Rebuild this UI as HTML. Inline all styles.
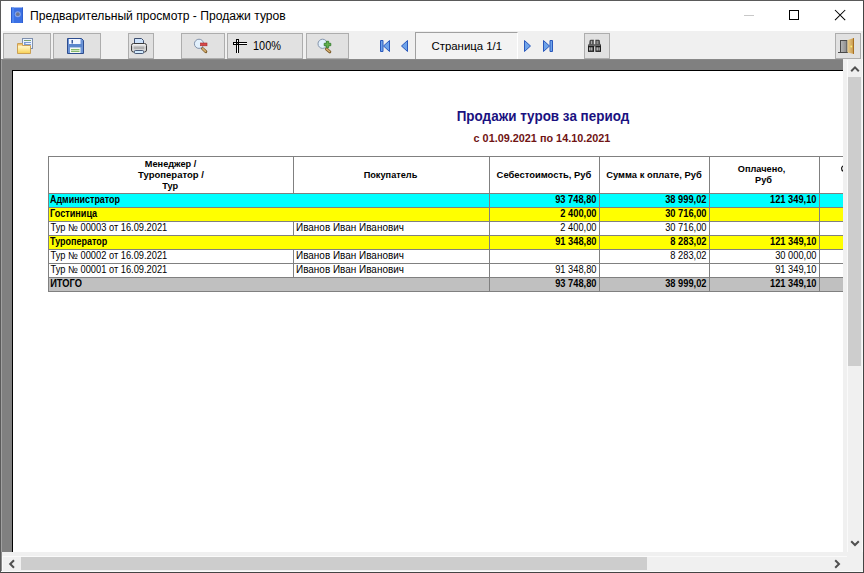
<!DOCTYPE html>
<html><head><meta charset="utf-8">
<style>
*{margin:0;padding:0;box-sizing:border-box}
html,body{width:864px;height:573px;overflow:hidden;background:#fff}
body{position:relative;font-family:"Liberation Sans",sans-serif;color:#000}
.a{position:absolute}
.t{position:absolute;white-space:nowrap;line-height:1}
.btn{position:absolute;top:33px;height:26px;background:#e1e1e1;border:1px solid #adadad}
.ln{position:absolute;background:#808080}
.b{font-weight:bold}
</style></head><body>
<!-- window border -->
<div class="a" style="left:0;top:0;width:864px;height:573px;border:1px solid #5a5a5a;border-right-color:#444;border-bottom-color:#444"></div>

<!-- title bar -->
<div class="a" style="left:1px;top:1px;width:862px;height:31px;background:#fff"></div>
<svg class="a" style="left:11px;top:7px" width="13" height="17" viewBox="0 0 13 17">
  <rect x="0" y="0.5" width="12" height="15.5" fill="#3b70e4"/>
  <rect x="0" y="0.5" width="1" height="15.5" fill="#2c5ccc"/>
  <rect x="1" y="0.5" width="2" height="15.5" fill="#4d85f0"/>
  <rect x="11" y="0.5" width="1" height="15.5" fill="#3060d0"/>
  <circle cx="6.8" cy="7.2" r="3" fill="#86a6ec"/>
  <circle cx="6.8" cy="7.2" r="1.9" fill="#6e7892"/>
</svg>

<div class="a" style="left:744px;top:15px;width:10px;height:1px;background:#c8c8c8"></div>
<div class="a" style="left:789px;top:10px;width:10px;height:10px;border:1px solid #000"></div>
<svg class="a" style="left:834px;top:9px" width="13" height="13" viewBox="0 0 13 13">
  <path d="M1 1 L11.2 11.2 M11.2 1 L1 11.2" stroke="#000" stroke-width="1.05"/>
</svg>

<!-- toolbar -->
<div class="a" style="left:1px;top:31px;width:862px;height:28px;background:#f0f0f0"></div>
<div class="a" style="left:1px;top:31px;width:2px;height:28px;background:#fafafa"></div>
<div class="btn" style="left:3px;width:48px"></div>
<div class="btn" style="left:53px;width:48px"></div>
<div class="btn" style="left:128px;width:26px"></div>
<div class="btn" style="left:181px;width:44px"></div>
<div class="btn" style="left:227px;width:76px"></div>
<div class="btn" style="left:306px;width:43px"></div>
<div class="a" style="left:415px;top:32px;width:103px;height:27px;background:#f3f3f3;border-top:1px solid #a0a0a0;border-left:1px solid #a0a0a0;border-right:1px solid #fff"></div>

<div class="btn" style="left:584px;width:26px"></div>
<div class="btn" style="left:835px;width:26px"></div>


<!-- toolbar icons -->
<svg class="a" style="left:0;top:0;overflow:visible" width="864" height="60" viewBox="0 0 864 60">
 <defs>
  <linearGradient id="gFold" x1="0" y1="0" x2="0" y2="1"><stop offset="0" stop-color="#fffae0"/><stop offset="0.45" stop-color="#fff0b0"/><stop offset="1" stop-color="#f7cf50"/></linearGradient>
  <linearGradient id="gPr" x1="0" y1="0" x2="0" y2="1"><stop offset="0" stop-color="#fafafa"/><stop offset="0.5" stop-color="#c8c8c8"/><stop offset="1" stop-color="#e8e8e8"/></linearGradient>
  <linearGradient id="gNav" x1="0" y1="0" x2="1" y2="0"><stop offset="0" stop-color="#8cc0f8"/><stop offset="1" stop-color="#2a62cc"/></linearGradient>
  <linearGradient id="gNavL" x1="1" y1="0" x2="0" y2="0"><stop offset="0" stop-color="#8cc0f8"/><stop offset="1" stop-color="#2a62cc"/></linearGradient>
  <linearGradient id="gDoor" x1="0" y1="0" x2="1" y2="0"><stop offset="0" stop-color="#ecd08e"/><stop offset="1" stop-color="#c49448"/></linearGradient>
  <linearGradient id="gFrame" x1="0" y1="0" x2="1" y2="0"><stop offset="0" stop-color="#b8b8b8"/><stop offset="1" stop-color="#8a8a8a"/></linearGradient>
 </defs>
 <!-- open -->
 <rect x="22.5" y="38.5" width="10" height="10" fill="#eaf4ff" stroke="#7e8fae"/>
 <rect x="24" y="40" width="7" height="1" fill="#7da06e"/>
 <rect x="24" y="42" width="7" height="1" fill="#7d9cd2"/>
 <rect x="24" y="44" width="7" height="1" fill="#7d9cd2"/>
 <rect x="24" y="42" width="1.5" height="4" fill="#7d9cd2"/>
 <path d="M17.5 43.5 H22.5 V45.5 H30.5 V53.5 H17.5 Z" fill="url(#gFold)" stroke="#caa055"/>
 <rect x="18" y="44" width="4" height="1.5" fill="#f4c068"/>
 <!-- save -->
 <path d="M67.5 38.5 H81.5 L83.5 40.5 V53.5 H67.5 Z" fill="#6b94d6" stroke="#2d4c8e"/>
 <rect x="69" y="39" width="11.5" height="5" fill="#f2f6ff"/>
 <rect x="71.5" y="40" width="1.5" height="3.5" fill="#3a5a9c"/>
 <rect x="69" y="44" width="13" height="3" fill="#5a86cc"/>
 <rect x="70" y="47.5" width="10.5" height="5.5" fill="#f6fbf2"/>
 <rect x="71" y="49" width="8.5" height="1.2" fill="#86b86a"/>
 <rect x="71" y="50.8" width="8.5" height="1.2" fill="#86b86a"/>
 <!-- print -->
 <path d="M134.5 38.5 H141.5 L143.5 40.5 V45.5 H134.5 Z" fill="#cde2fa" stroke="#3e4e6e"/>
 <rect x="131.5" y="43.5" width="15" height="8.5" rx="2" fill="url(#gPr)" stroke="#3c3c3c"/>
 <rect x="134" y="46.5" width="10" height="2.5" fill="#b0b0b0"/>
 <rect x="134.5" y="50.5" width="9" height="3" rx="0.8" fill="#d2eafc" stroke="#4a5a78"/>
 <!-- zoom out -->
 <line x1="202.5" y1="48.5" x2="205.8" y2="51.6" stroke="#7a5a28" stroke-width="3" stroke-linecap="round"/>
 <line x1="202.7" y1="48.7" x2="205.5" y2="51.3" stroke="#d8b070" stroke-width="1.6" stroke-linecap="round"/>
 <circle cx="199" cy="43.8" r="4.6" fill="#e2f0fc" stroke="#8494ac" stroke-width="1"/>
 <rect x="200.5" y="43" width="6.5" height="2.8" fill="#d84848" stroke="#a42828" stroke-width="0.6"/>
 <!-- fit -->
 <g shape-rendering="crispEdges" fill="#000">
 <rect x="236" y="39" width="1" height="14"/><rect x="238" y="39" width="1" height="14"/><rect x="236" y="39" width="3" height="1"/>
 <rect x="233" y="42" width="14" height="1"/><rect x="233" y="44" width="14" height="1"/><rect x="233" y="42" width="1" height="3"/>
 <rect x="237" y="40" width="1" height="2" fill="#fff"/><rect x="237" y="45" width="1" height="8" fill="#fff"/>
 <rect x="234" y="43" width="2" height="1" fill="#fff"/><rect x="239" y="43" width="8" height="1" fill="#fff"/>
 <rect x="237" y="43" width="1" height="1" fill="#888"/>
 </g>
 <!-- zoom in -->
 <line x1="326.5" y1="49" x2="329.8" y2="51.8" stroke="#7a5a28" stroke-width="3" stroke-linecap="round"/>
 <line x1="326.7" y1="49.2" x2="329.5" y2="51.5" stroke="#d8b070" stroke-width="1.6" stroke-linecap="round"/>
 <circle cx="322.6" cy="43.8" r="4.6" fill="#e2f0fc" stroke="#8494ac" stroke-width="1"/>
 <path d="M326.3 41.3 H328.7 V43.3 H330.8 V45.7 H328.7 V47.7 H326.3 V45.7 H324.2 V43.3 H326.3 Z" fill="#62b04e" stroke="#2e7a2a" stroke-width="0.8"/>
 <!-- nav -->
 <g stroke="#2a58bc" stroke-width="1" stroke-linejoin="round">
 <rect x="380.5" y="40.5" width="2.5" height="11" fill="#6ea3ea"/>
 <path d="M389.5 40.5 L383.5 46 L389.5 51.5 Z" fill="#6ea3ea"/>
 <path d="M407.5 40.5 L401.5 46 L407.5 51.5 Z" fill="#6ea3ea"/>
 <path d="M524.5 40.5 L530.5 46 L524.5 51.5 Z" fill="#6ea3ea"/>
 <path d="M543.5 40.5 L549.5 46 L543.5 51.5 Z" fill="#6ea3ea"/>
 <rect x="550" y="40.5" width="2.5" height="11" fill="#6ea3ea"/>
 </g>
 <!-- binoculars -->
 <path d="M589.6 40.6 L590.6 39.8 H593.8 V44.6 H589.2 Z" fill="#3c3c3c"/>
 <path d="M595.4 39.8 H598.8 L599.8 40.6 L600.2 44.6 H595.4 Z" fill="#3c3c3c"/>
 <rect x="590.8" y="40.8" width="1.1" height="3.4" fill="#b4b4b4"/><rect x="592.6" y="40.8" width="0.8" height="3.4" fill="#8a8a8a"/>
 <rect x="596.6" y="40.8" width="1.1" height="3.4" fill="#b4b4b4"/><rect x="598.4" y="40.8" width="0.8" height="3.4" fill="#8a8a8a"/>
 <rect x="588.2" y="44.4" width="12.8" height="1.9" fill="#2e2e2e"/>
 <rect x="589" y="44.9" width="11.2" height="0.7" fill="#8c8c8c"/>
 <rect x="588" y="46" width="6.1" height="5.9" fill="#1e1e1e"/>
 <rect x="595.4" y="46" width="5.6" height="5.9" fill="#1e1e1e"/>
 <rect x="589.2" y="47.3" width="1.3" height="3.3" fill="#d4d4d4"/><rect x="591.1" y="47.3" width="1.4" height="3.3" fill="#b8b8b8"/>
 <rect x="596.5" y="47.3" width="1.3" height="3.3" fill="#d4d4d4"/><rect x="598.4" y="47.3" width="1.4" height="3.3" fill="#b8b8b8"/>
 <!-- door -->
 <rect x="840.5" y="40.5" width="6.5" height="12" fill="url(#gFrame)" stroke="#4a4a4a"/>
 <rect x="838" y="52" width="10" height="1" fill="#4a4a4a"/>
 <path d="M847.5 40 L854 38 V54 L847.5 52.5 Z" fill="url(#gDoor)"/>
 <path d="M853 38.3 L854 38 V54 L853 53.8 Z" fill="#a87020"/>
 <circle cx="851.3" cy="46.5" r="0.9" fill="#fff070"/>
</svg>

<!-- preview gray area -->
<div class="a" style="left:1px;top:59px;width:842px;height:493px;background:#808080"></div>
<div class="a" style="left:1px;top:59px;width:1px;height:493px;background:#a0a0a0"></div>
<div class="a" style="left:1px;top:59px;width:842px;height:1px;background:#888"></div>
<!-- page -->
<div class="a" id="page" style="left:12px;top:70px;width:831px;height:482px;background:#fff;border-top:1px solid #000;border-left:1px solid #000;overflow:hidden">
<div class="a" style="left:-13px;top:-71px;width:864px;height:573px">
<div class="a" style="left:48px;top:194px;width:900px;height:13px;background:#00ffff"></div>
<div class="a" style="left:48px;top:208px;width:900px;height:13px;background:#ffff00"></div>
<div class="a" style="left:48px;top:236px;width:900px;height:13px;background:#ffff00"></div>
<div class="a" style="left:48px;top:278px;width:900px;height:13px;background:#c0c0c0"></div>
<div class="a" style="left:48px;top:156px;width:900px;height:1px;background:#808080"></div>
<div class="a" style="left:48px;top:193px;width:900px;height:1px;background:#808080"></div>
<div class="a" style="left:48px;top:207px;width:900px;height:1px;background:#808080"></div>
<div class="a" style="left:48px;top:221px;width:900px;height:1px;background:#808080"></div>
<div class="a" style="left:48px;top:235px;width:900px;height:1px;background:#808080"></div>
<div class="a" style="left:48px;top:249px;width:900px;height:1px;background:#808080"></div>
<div class="a" style="left:48px;top:263px;width:900px;height:1px;background:#808080"></div>
<div class="a" style="left:48px;top:277px;width:900px;height:1px;background:#808080"></div>
<div class="a" style="left:48px;top:291px;width:900px;height:1px;background:#808080"></div>
<div class="a" style="left:48px;top:156px;width:1px;height:136px;background:#808080"></div>
<div class="a" style="left:489px;top:156px;width:1px;height:136px;background:#808080"></div>
<div class="a" style="left:599px;top:156px;width:1px;height:136px;background:#808080"></div>
<div class="a" style="left:709px;top:156px;width:1px;height:136px;background:#808080"></div>
<div class="a" style="left:819px;top:156px;width:1px;height:136px;background:#808080"></div>
<div class="a" style="left:293px;top:156px;width:1px;height:37px;background:#808080"></div>
<div class="a" style="left:293px;top:221px;width:1px;height:15px;background:#808080"></div>
<div class="a" style="left:293px;top:249px;width:1px;height:15px;background:#808080"></div>
<div class="a" style="left:293px;top:263px;width:1px;height:15px;background:#808080"></div>
<svg class="a" style="left:836px;top:160px" width="20" height="16"><ellipse cx="8.2" cy="8.5" rx="2.6" ry="2.7" fill="none" stroke="#111" stroke-width="1.2"/></svg>
<div class="t" style="left:243px;width:600px;text-align:center;transform-origin:50% 11px;top:110px;font-size:13.3px;font-weight:bold;color:#1a1180;transform:scale(1.012,1.1);">Продажи туров за период</div>
<div class="t" style="left:242.39999999999998px;width:600px;text-align:center;transform-origin:50% 9px;top:133px;font-size:10.7px;font-weight:bold;color:#701414;transform:scale(1.015,1.0);">с 01.09.2021 по 14.10.2021</div>
<div class="t" style="left:-129.4px;width:600px;text-align:center;transform-origin:50% 7px;top:160px;font-size:9.2px;font-weight:bold;color:#000;transform:scale(1.0,1.08);">Менеджер /</div>
<div class="t" style="left:-129px;width:600px;text-align:center;transform-origin:50% 7px;top:171px;font-size:9.2px;font-weight:bold;color:#000;transform:scale(1.035,1.08);">Туроператор /</div>
<div class="t" style="left:-129.8px;width:600px;text-align:center;transform-origin:50% 7px;top:182px;font-size:9.2px;font-weight:bold;color:#000;transform:scale(1.0,1.08);">Тур</div>
<div class="t" style="left:90.5px;width:600px;text-align:center;transform-origin:50% 7px;top:171px;font-size:9.2px;font-weight:bold;color:#000;transform:scale(1.0,1.08);">Покупатель</div>
<div class="t" style="left:244px;width:600px;text-align:center;transform-origin:50% 7px;top:171px;font-size:9.2px;font-weight:bold;color:#000;transform:scale(1.025,1.08);">Себестоимость, Руб</div>
<div class="t" style="left:353.70000000000005px;width:600px;text-align:center;transform-origin:50% 7px;top:171px;font-size:9.2px;font-weight:bold;color:#000;transform:scale(1.02,1.08);">Сумма к оплате, Руб</div>
<div class="t" style="left:461.6px;width:600px;text-align:center;transform-origin:50% 7px;top:165px;font-size:9.2px;font-weight:bold;color:#000;transform:scale(1.0,1.08);">Оплачено,</div>
<div class="t" style="left:463.5px;width:600px;text-align:center;transform-origin:50% 7px;top:176px;font-size:9.2px;font-weight:bold;color:#000;transform:scale(1.0,1.08);">Руб</div>
<div class="t" style="left:50.2px;transform-origin:0 7px;top:196px;font-size:9.3px;font-weight:bold;color:#000;transform:scale(0.96,1.08);">Администратор</div>
<div class="t" style="left:196.5px;width:400px;text-align:right;transform-origin:100% 7px;top:196px;font-size:9.3px;font-weight:bold;color:#000;transform:scale(1.0,1.08);">93 748,80</div>
<div class="t" style="left:306.5px;width:400px;text-align:right;transform-origin:100% 7px;top:196px;font-size:9.3px;font-weight:bold;color:#000;transform:scale(1.0,1.08);">38 999,02</div>
<div class="t" style="left:416.5px;width:400px;text-align:right;transform-origin:100% 7px;top:196px;font-size:9.3px;font-weight:bold;color:#000;transform:scale(1.0,1.08);">121 349,10</div>
<div class="t" style="left:50.2px;transform-origin:0 7px;top:210px;font-size:9.3px;font-weight:bold;color:#000;transform:scale(0.98,1.08);">Гостиница</div>
<div class="t" style="left:196.5px;width:400px;text-align:right;transform-origin:100% 7px;top:210px;font-size:9.3px;font-weight:bold;color:#000;transform:scale(1.0,1.08);">2 400,00</div>
<div class="t" style="left:306.5px;width:400px;text-align:right;transform-origin:100% 7px;top:210px;font-size:9.3px;font-weight:bold;color:#000;transform:scale(1.0,1.08);">30 716,00</div>
<div class="t" style="left:50.5px;transform-origin:0 7px;top:224px;font-size:9.3px;color:#000;transform:scale(1.0,1.08);">Тур № 00003 от 16.09.2021</div>
<div class="t" style="left:295.6px;transform-origin:0 7px;top:224px;font-size:9.3px;color:#000;transform:scale(1.07,1.08);">Иванов Иван Иванович</div>
<div class="t" style="left:196.5px;width:400px;text-align:right;transform-origin:100% 7px;top:224px;font-size:9.3px;color:#000;transform:scale(1.0,1.08);">2 400,00</div>
<div class="t" style="left:306.5px;width:400px;text-align:right;transform-origin:100% 7px;top:224px;font-size:9.3px;color:#000;transform:scale(1.0,1.08);">30 716,00</div>
<div class="t" style="left:50.2px;transform-origin:0 7px;top:238px;font-size:9.3px;font-weight:bold;color:#000;transform:scale(0.967,1.08);">Туроператор</div>
<div class="t" style="left:196.5px;width:400px;text-align:right;transform-origin:100% 7px;top:238px;font-size:9.3px;font-weight:bold;color:#000;transform:scale(1.0,1.08);">91 348,80</div>
<div class="t" style="left:306.5px;width:400px;text-align:right;transform-origin:100% 7px;top:238px;font-size:9.3px;font-weight:bold;color:#000;transform:scale(1.0,1.08);">8 283,02</div>
<div class="t" style="left:416.5px;width:400px;text-align:right;transform-origin:100% 7px;top:238px;font-size:9.3px;font-weight:bold;color:#000;transform:scale(1.0,1.08);">121 349,10</div>
<div class="t" style="left:50.5px;transform-origin:0 7px;top:252px;font-size:9.3px;color:#000;transform:scale(1.0,1.08);">Тур № 00002 от 16.09.2021</div>
<div class="t" style="left:295.6px;transform-origin:0 7px;top:252px;font-size:9.3px;color:#000;transform:scale(1.07,1.08);">Иванов Иван Иванович</div>
<div class="t" style="left:306.5px;width:400px;text-align:right;transform-origin:100% 7px;top:252px;font-size:9.3px;color:#000;transform:scale(1.0,1.08);">8 283,02</div>
<div class="t" style="left:416.5px;width:400px;text-align:right;transform-origin:100% 7px;top:252px;font-size:9.3px;color:#000;transform:scale(1.0,1.08);">30 000,00</div>
<div class="t" style="left:50.5px;transform-origin:0 7px;top:266px;font-size:9.3px;color:#000;transform:scale(1.0,1.08);">Тур № 00001 от 16.09.2021</div>
<div class="t" style="left:295.6px;transform-origin:0 7px;top:266px;font-size:9.3px;color:#000;transform:scale(1.07,1.08);">Иванов Иван Иванович</div>
<div class="t" style="left:196.5px;width:400px;text-align:right;transform-origin:100% 7px;top:266px;font-size:9.3px;color:#000;transform:scale(1.0,1.08);">91 348,80</div>
<div class="t" style="left:416.5px;width:400px;text-align:right;transform-origin:100% 7px;top:266px;font-size:9.3px;color:#000;transform:scale(1.0,1.08);">91 349,10</div>
<div class="t" style="left:50.2px;transform-origin:0 7px;top:280px;font-size:9.3px;font-weight:bold;color:#000;transform:scale(1.0,1.08);">ИТОГО</div>
<div class="t" style="left:196.5px;width:400px;text-align:right;transform-origin:100% 7px;top:280px;font-size:9.3px;font-weight:bold;color:#000;transform:scale(1.0,1.08);">93 748,80</div>
<div class="t" style="left:306.5px;width:400px;text-align:right;transform-origin:100% 7px;top:280px;font-size:9.3px;font-weight:bold;color:#000;transform:scale(1.0,1.08);">38 999,02</div>
<div class="t" style="left:416.5px;width:400px;text-align:right;transform-origin:100% 7px;top:280px;font-size:9.3px;font-weight:bold;color:#000;transform:scale(1.0,1.08);">121 349,10</div>
</div>
</div>

<!-- right strip / scrollbars -->
<div class="a" style="left:843px;top:59px;width:20px;height:513px;background:#f0f0f0"></div>
<div class="a" style="left:847px;top:60px;width:1px;height:492px;background:#fafafa"></div>
<div class="a" style="left:848px;top:77px;width:13px;height:289px;background:#cdcdcd"></div>
<div class="a" style="left:862px;top:59px;width:1px;height:513px;background:#fafafa"></div>
<!-- horizontal -->
<div class="a" style="left:1px;top:552px;width:862px;height:20px;background:#f0f0f0"></div>
<div class="a" style="left:2px;top:556px;width:845px;height:1px;background:#fafafa"></div>
<div class="a" style="left:21px;top:557px;width:626px;height:13px;background:#cdcdcd"></div>
<div class="a" style="left:1px;top:571px;width:862px;height:1px;background:#fafafa"></div>
<div class="a" style="left:1px;top:552px;width:1px;height:19px;background:#8c8c8c"></div>
<div class="a" style="left:2px;top:556px;width:1px;height:15px;background:#fafafa"></div>
<!-- arrows -->
<svg class="a" style="left:850px;top:64px" width="10" height="9" viewBox="0 0 10 9"><path d="M1.2 7.2 L5 3.4 L8.8 7.2" fill="none" stroke="#505050" stroke-width="2"/></svg>
<svg class="a" style="left:850px;top:539px" width="10" height="9" viewBox="0 0 10 9"><path d="M1.2 2.2 L5 6 L8.8 2.2" fill="none" stroke="#505050" stroke-width="2"/></svg>
<svg class="a" style="left:7px;top:559px" width="9" height="10" viewBox="0 0 9 10"><path d="M7 1.2 L3.2 5 L7 8.8" fill="none" stroke="#505050" stroke-width="2"/></svg>
<svg class="a" style="left:833px;top:559px" width="9" height="10" viewBox="0 0 9 10"><path d="M2.2 1.2 L6 5 L2.2 8.8" fill="none" stroke="#505050" stroke-width="2"/></svg>
<div class="t" style="left:30.4px;transform-origin:0 10px;top:10px;font-size:12px;color:#000;transform:scale(1.01,1.0);">Предварительный просмотр - Продажи туров</div>
<div class="t" style="left:431.5px;transform-origin:0 9px;top:41px;font-size:11.4px;color:#000;">Страница 1/1</div>
<div class="t" style="left:252.5px;transform-origin:0 10px;top:40px;font-size:12px;color:#000;transform:scale(0.91,1.0);">100%</div>
</body></html>
